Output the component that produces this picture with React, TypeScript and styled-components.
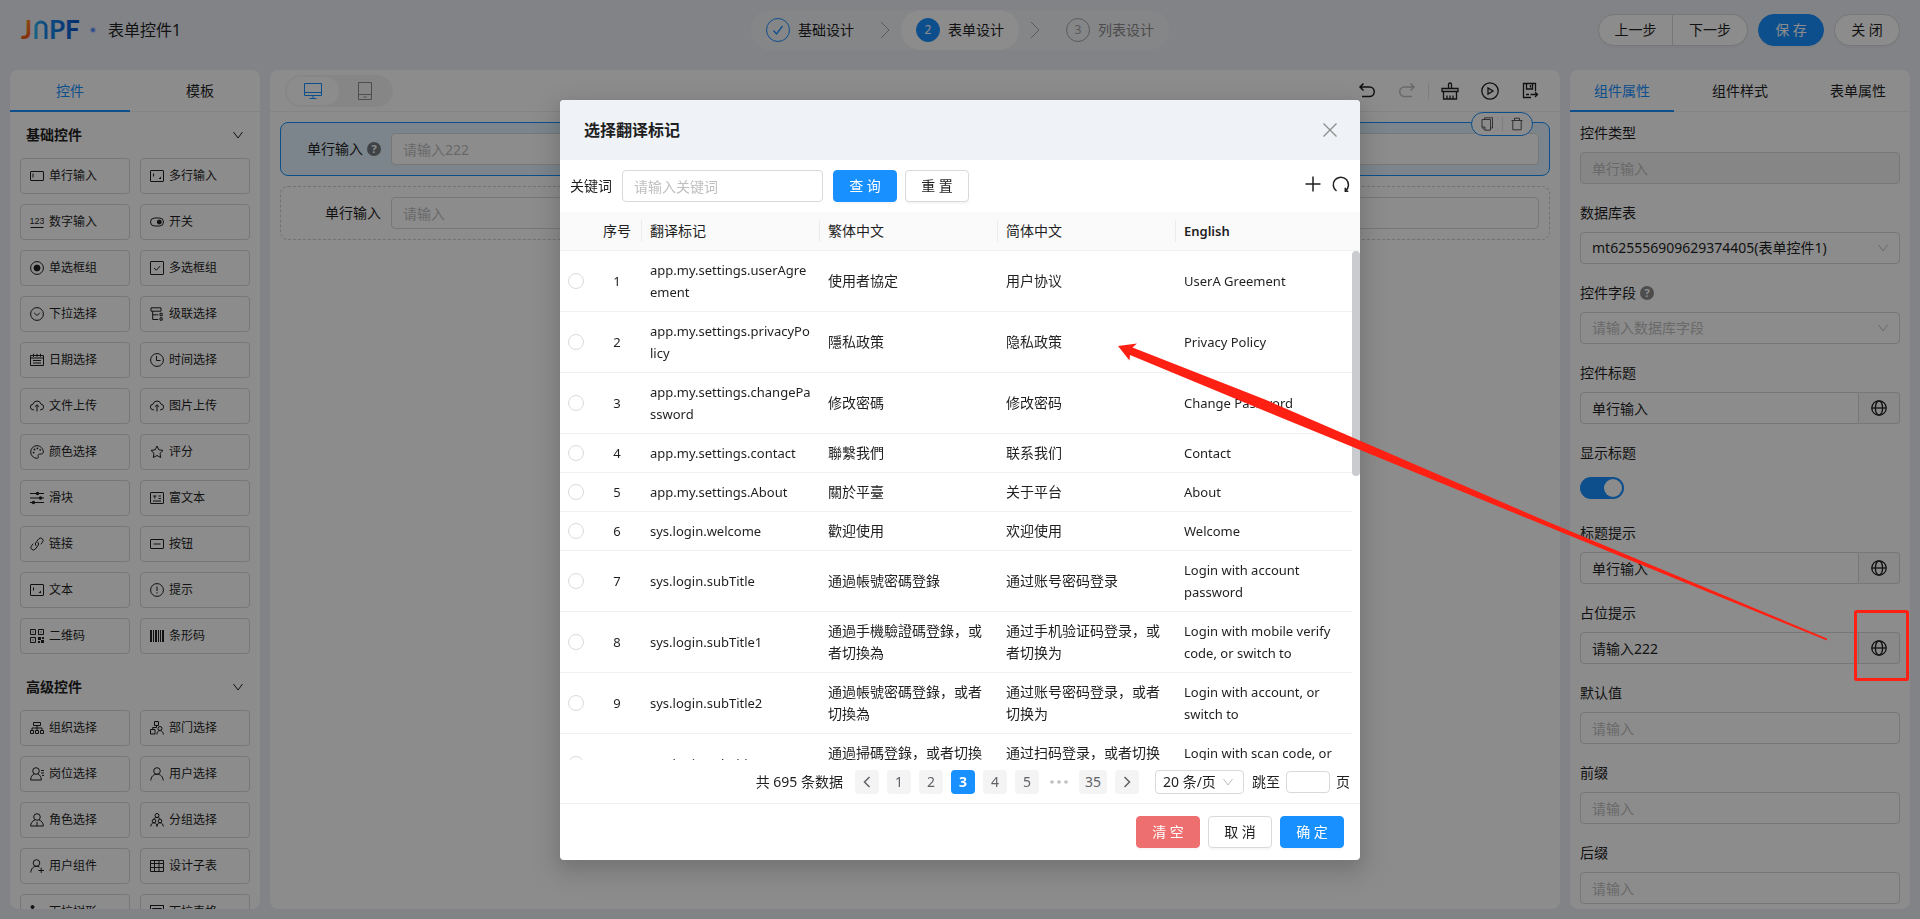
import React, { useState } from "react";
import styled, { createGlobalStyle, css } from "styled-components";

const primary = "#1890ff";
const line = "#d9d9d9";
const softLine = "#f0f0f0";
const textColor = "#1f1f1f";
const muted = "#bfbfbf";
const mark = "#ff2014";

const GlobalStyle = createGlobalStyle`
  * { box-sizing: border-box; }
  body {
    margin: 0;
    font-family: "Noto Sans", "Noto Sans CJK SC", sans-serif;
    font-size: 14px;
    line-height: 22px;
    color: ${textColor};
    overflow: hidden;
  }
  button, input, select { font: inherit; color: inherit; margin: 0; }
  button { cursor: pointer; padding: 0; border: 0; background: none; }
  svg { display: block; flex: none; }
`;

/* ---------- icons ---------- */

const Glyph = styled.svg<{ $size?: number }>`
  width: ${(p) => p.$size ?? 14}px;
  height: ${(p) => p.$size ?? 14}px;
  fill: none;
  stroke: currentColor;
  stroke-width: 1;
`;

const IconDigits = styled.text`
  font-family: "Liberation Sans", sans-serif;
  font-size: 9px;
  fill: currentColor;
  stroke: none;
`;

const controlIcons: Record<string, React.ReactNode> = {
  input: (
    <>
      <rect x=".5" y="2.5" width="13" height="9" rx=".5" />
      <path d="M3 4.5v4" />
    </>
  ),
  textarea: (
    <>
      <rect x=".5" y="1.5" width="13" height="11" rx=".5" />
      <path d="M3.5 4.5v3" />
      <path d="M11 7.5V10H8.5z" fill="currentColor" stroke="none" />
    </>
  ),
  number: (
    <>
      <IconDigits x="-.5" y="9">123</IconDigits>
      <path d="M.5 12.5h13" />
    </>
  ),
  toggle: (
    <>
      <rect x=".5" y="3" width="13" height="8" rx="4" />
      <circle cx="9.3" cy="7" r="2" fill="currentColor" />
    </>
  ),
  radio: (
    <>
      <circle cx="7" cy="7" r="6.4" />
      <circle cx="7" cy="7" r="3" fill="currentColor" />
    </>
  ),
  checkbox: (
    <>
      <rect x=".5" y=".5" width="13" height="13" rx=".5" />
      <path d="M4 7l2.3 2.2L10.2 5" />
    </>
  ),
  select: (
    <>
      <circle cx="7" cy="7" r="6.4" />
      <path d="M4.2 5.8L7 8.6l2.8-2.8" />
    </>
  ),
  cascade: (
    <>
      <path d="M1 .8h10v3.4H1zM2.7 4.2v8.3h5.6M2.7 7.8h5.6" />
      <path d="M10 6.3h2.2v2.4H10zM10 10.8h2.2v2.4H10z" />
    </>
  ),
  date: <path d="M.5 2.5h13v10H.5zM.5 5h13M3.5.8v3M7 .8v3M10.5.8v3M3 7.5h8M3 10h8" />,
  time: (
    <>
      <circle cx="7" cy="7" r="6.4" />
      <path d="M6.5 3v4.5h4" />
    </>
  ),
  upload: (
    <path d="M4 10.8H3.4A2.8 2.8 0 0 1 3 5.2a4.1 4.1 0 0 1 8 0 2.8 2.8 0 0 1-.4 5.6H10M7 12.5V6M4.9 7.8L7 5.8l2.1 2" />
  ),
  color: (
    <>
      <path d="M7 .7a6.3 6.3 0 1 0 0 12.6c1.3 0 1.6-.9 1.2-1.8-.6-1.3.2-2.5 1.6-2.5h1.5c1.3 0 2-.8 2-2C13.3 3.4 10.5.7 7 .7z" />
      <g fill="currentColor" stroke="none">
        <circle cx="3.6" cy="7.6" r=".9" />
        <circle cx="4.5" cy="4.5" r=".9" />
        <circle cx="7.4" cy="3.3" r=".9" />
        <circle cx="10.2" cy="4.8" r=".9" />
      </g>
    </>
  ),
  rate: <path d="M7 1l1.8 3.8 4.2.6-3 2.9.7 4.2L7 10.5l-3.7 2 .7-4.2-3-2.9 4.2-.6z" />,
  slider: (
    <>
      <path d="M0 2.5h14M0 7h14M0 11.5h14" />
      <g fill="currentColor" stroke="none">
        <circle cx="7.5" cy="2.5" r="1.7" />
        <circle cx="10.5" cy="7" r="1.7" />
        <circle cx="3.5" cy="11.5" r="1.7" />
      </g>
    </>
  ),
  rich: (
    <>
      <rect x=".5" y="1.5" width="13" height="11" rx=".5" />
      <path d="M3 5h3.5M4.8 5v2.5M8.5 5H11M8.5 7.5H11M3 10h8" />
    </>
  ),
  link: (
    <path d="M6.2 8.8a2.5 2.5 0 0 1 0-3.6l2.6-3.4a2.5 2.5 0 0 1 3.6 3.5L10.8 7.3M7.8 5.2a2.5 2.5 0 0 1 0 3.6l-2.6 3.4a2.5 2.5 0 0 1-3.6-3.5L3.2 6.7" />
  ),
  button: (
    <>
      <rect x=".5" y="2.5" width="13" height="9" rx=".5" />
      <path d="M3.5 7h7" />
    </>
  ),
  alert: (
    <>
      <circle cx="7" cy="7" r="6.4" />
      <path d="M7 3.5v4.5M7 9.2v1.3" />
    </>
  ),
  qrcode: (
    <>
      <path d="M.5.5h5v5h-5zM8.5.5h5v5h-5zM.5 8.5h5v5h-5z" />
      <path
        d="M2.5 2.5h1v1h-1zM10.5 2.5h1v1h-1zM2.5 10.5h1v1h-1zM8 8h3v3H8zM11 11h3v3h-3zM12 8h2v2h-2zM8 12h2v2H8z"
        fill="currentColor"
        stroke="none"
      />
    </>
  ),
  barcode: (
    <path
      d="M0 1h2v12H0zM3 1h1v12H3zM5 1h2v12H5zM8 1h1v12H8zM10 1h1v12h-1zM12 1h2v12h-2z"
      fill="currentColor"
      stroke="none"
    />
  ),
  org: <path d="M3.5 1.5h7v3h-7zM.5 9.5h3v3h-3zM5.5 9.5h3v3h-3zM10.5 9.5h3v3h-3zM7 4.5v5M2 9.5V7h10v2.5" />,
  dept: (
    <>
      <path d="M4.5.5h4v4h-4zM.5 8.5H5V13H.5zM6.5 4.5v2H2.7v2" />
      <circle cx="10" cy="7.5" r="2" />
      <path d="M6.8 13.5c.2-2.5 1.5-4 3.2-4s3 1.5 3.5 4" />
    </>
  ),
  post: (
    <>
      <circle cx="6" cy="4" r="3.3" />
      <path d="M4.3 6.8C2 8 .8 10 .6 13h10.8c-.2-3-1.4-5-3.7-6.2M11 3.5h3M11 6h3M12 8.5h2" />
    </>
  ),
  user: (
    <>
      <circle cx="7" cy="4" r="3.3" />
      <path d="M.8 13.5C1 10 3 7.3 7 7.3s6 2.7 6.2 6.2" />
    </>
  ),
  role: (
    <>
      <circle cx="7" cy="4" r="3.3" />
      <path d="M5 6.8C2.3 8 .8 10 .6 13h12.8c-.2-3-1.7-5-4.4-6.2M7 9v4" />
    </>
  ),
  group: (
    <>
      <circle cx="7" cy="2.5" r="2" />
      <circle cx="4" cy="8" r="1.8" />
      <circle cx="10" cy="8" r="1.8" />
      <path d="M4 6c.3-1 1.3-1.5 3-1.5s2.7.5 3 1.5M.8 13.5c0-2.2 1.2-3.7 3.2-3.7s3 1.5 3 3.7c0-2.2 1-3.7 3-3.7s3.2 1.5 3.2 3.7" />
    </>
  ),
  userAdd: (
    <>
      <circle cx="6.5" cy="4" r="3.3" />
      <path d="M.8 13.5C1 10 3 7.3 6.5 7.3c1.2 0 2.2.3 3 .8M8.5 11.5H14M11.2 8.8V14" />
    </>
  ),
  table: <path d="M.5 1.5h13v11H.5zM.5 4.5h13M.5 8.5h13M4.5 1.5v11M9 1.5v11" />,
  tree: (
    <>
      <path d="M2.5 2.5v9h7M2.5 7h7" />
      <circle cx="2.5" cy="2" r="1.5" fill="currentColor" />
      <circle cx="11" cy="7" r="1.5" />
      <circle cx="11" cy="11.5" r="1.5" />
    </>
  ),
  popupTable: (
    <>
      <rect x=".5" y=".5" width="13" height="13" />
      <path d="M2.5 3.5h9v7h-9zM2.5 7h9" />
    </>
  ),
};

const ChevronDown = ({ size = 12 }: { size?: number }) => (
  <Glyph $size={size} viewBox="0 0 12 12" aria-hidden>
    <path d="M1.5 3L6 9l4.5-6" />
  </Glyph>
);

const ChevronStep = () => (
  <Glyph $size={16} viewBox="0 0 16 16" aria-hidden>
    <path d="M4 0l8 8-8 8" />
  </Glyph>
);

const GlobeIcon = () => (
  <Glyph $size={16} viewBox="0 0 16 16" aria-hidden>
    <g strokeWidth="1.3">
      <circle cx="8" cy="8" r="7.2" />
      <ellipse cx="8" cy="8" rx="3.6" ry="7.2" />
      <path d="M.8 8h14.4" />
    </g>
  </Glyph>
);

const HelpDot = styled.span<{ $light?: boolean }>`
  display: inline-flex;
  align-items: center;
  justify-content: center;
  width: 14px;
  height: 14px;
  border-radius: 50%;
  background: ${(p) => (p.$light ? "#8c8c8c" : "#737b80")};
  color: #fff;
  font-size: 11px;
  font-weight: 700;
  line-height: 14px;
`;

/* ---------- page frame ---------- */

const Page = styled.div`
  display: flex;
  flex-direction: column;
  height: 100vh;
  background: #ebeef5;
`;

const Header = styled.header`
  display: grid;
  grid-template-columns: 1fr auto 1fr;
  align-items: center;
  height: 60px;
  margin-bottom: 10px;
  padding: 0 20px;
`;

const Brand = styled.div`
  display: flex;
  align-items: center;
  gap: 12px;
  padding-left: 2px;
  font-size: 16px;
`;

const LogoMark = styled.svg`
  width: 56px;
  height: 20px;
  font-family: Lato, sans-serif;
  font-size: 26px;
  font-weight: 700;
  overflow: visible;
`;

const BrandDot = styled.i`
  width: 6px;
  height: 6px;
  border: 1px solid #c9dbff;
  border-radius: 50%;
  background: #5a8dff;
`;

const Steps = styled.ol`
  display: flex;
  margin: 0;
  padding: 0;
  list-style: none;
  border-radius: 20px;
  background: #f2f4f7;
`;

const StepGap = styled.li`
  display: flex;
  align-items: center;
  justify-content: center;
  width: 32px;
  color: #a6a6a6;
`;

const Step = styled.li<{ $active?: boolean; $waiting?: boolean }>`
  display: flex;
  align-items: center;
  gap: 8px;
  height: 40px;
  padding: 0 15px;
  border-radius: 20px;
  background: ${(p) => (p.$active ? "#fff" : "transparent")};
  color: ${(p) => (p.$waiting ? "#8c8c8c" : textColor)};
`;

const StepBadge = styled.span<{ $state: "done" | "active" | "waiting" }>`
  display: flex;
  align-items: center;
  justify-content: center;
  width: 24px;
  height: 24px;
  border: 1px solid ${(p) => (p.$state === "waiting" ? "#a6a6a6" : primary)};
  border-radius: 50%;
  background: ${(p) => (p.$state === "active" ? primary : "transparent")};
  color: ${(p) => (p.$state === "active" ? "#fff" : p.$state === "done" ? primary : "#a6a6a6")};
  font-size: 12px;
`;

const HeaderActions = styled.div`
  display: flex;
  justify-content: flex-end;
  gap: 10px;
`;

const PillGroup = styled.div`
  display: flex;
`;

const PillButton = styled.button<{ $primary?: boolean; $side?: "left" | "right" }>`
  width: ${(p) => (p.$side ? 75 : 66)}px;
  height: 32px;
  border: 1px solid ${(p) => (p.$primary ? primary : line)};
  border-left-width: ${(p) => (p.$side === "right" ? 0 : 1)}px;
  border-radius: ${(p) =>
    p.$side === "left" ? "16px 0 0 16px" : p.$side === "right" ? "0 16px 16px 0" : "16px"};
  background: ${(p) => (p.$primary ? primary : "#fff")};
  color: ${(p) => (p.$primary ? "#fff" : textColor)};
  box-shadow: 0 2px 0 rgba(0, 0, 0, 0.02);
`;

const Workspace = styled.main`
  display: flex;
  flex: 1;
  gap: 10px;
  min-height: 0;
  padding: 0 10px 10px;
`;

const Panel = styled.section<{ $width?: number }>`
  display: flex;
  flex-direction: column;
  flex: ${(p) => (p.$width ? `0 0 ${p.$width}px` : "1")};
  min-width: 0;
  border-radius: 8px;
  background: #fff;
  overflow: hidden;
`;

const TabBar = styled.div`
  display: flex;
  flex: none;
  justify-content: space-between;
  height: 42px;
  box-shadow: inset 0 -1px ${softLine};
`;

const Tab = styled.button<{ $active?: boolean; $width: number }>`
  width: ${(p) => p.$width}px;
  padding-top: 2px;
  border-bottom: 2px solid ${(p) => (p.$active ? primary : "transparent")};
  color: ${(p) => (p.$active ? primary : textColor)};
`;

/* ---------- control palette ---------- */

const PaletteBody = styled.div`
  display: flex;
  flex-direction: column;
  gap: 10px;
  padding: 0 10px;
  overflow: hidden;
`;

const GroupTitle = styled.h3`
  display: flex;
  align-items: center;
  justify-content: space-between;
  height: 46px;
  margin: 0;
  padding: 0 6px;
  font-size: 14px;
  font-weight: 700;
`;

const ControlGrid = styled.div`
  display: grid;
  grid-template-columns: 1fr 1fr;
  gap: 10px;
`;

const ControlButton = styled.button`
  display: flex;
  align-items: center;
  gap: 5px;
  height: 36px;
  padding: 0 9px;
  border: 1px solid ${line};
  border-radius: 4px;
  font-size: 12px;
`;

/* ---------- canvas ---------- */

const Toolbar = styled.div`
  display: flex;
  flex: none;
  align-items: center;
  justify-content: space-between;
  height: 42px;
  padding: 0 10px 0 15px;
  border-bottom: 1px solid ${softLine};
`;

const DeviceSwitch = styled.div`
  display: flex;
  padding: 2px;
  border-radius: 16px;
  background: #f5f5f5;
`;

const DeviceButton = styled.button<{ $active?: boolean }>`
  display: flex;
  align-items: center;
  justify-content: center;
  width: 52px;
  height: 28px;
  border-radius: 14px;
  background: ${(p) => (p.$active ? "#fff" : "transparent")};
  color: ${(p) => (p.$active ? primary : "#8c8c8c")};
`;

const ToolGroup = styled.div`
  display: flex;
  align-items: center;
`;

const ToolButton = styled.button<{ $off?: boolean }>`
  display: flex;
  align-items: center;
  justify-content: center;
  width: 40px;
  height: 32px;
  color: ${(p) => (p.$off ? muted : textColor)};
`;

const ToolDivider = styled.i`
  width: 1px;
  height: 16px;
  margin: 0 1px;
  background: #e4e4e4;
`;

const FormCanvas = styled.div`
  display: flex;
  flex-direction: column;
  gap: 10px;
  padding: 10px;
`;

const FormRow = styled.div<{ $selected?: boolean }>`
  position: relative;
  display: flex;
  align-items: center;
  padding: 10px;
  border: 1px dashed #cfcfcf;
  border-radius: 8px;
  ${(p) =>
    p.$selected &&
    css`
      border: 1px solid ${primary};
      background: #e0f2fd;
    `}
`;

const RowLabel = styled.label`
  display: flex;
  align-items: center;
  justify-content: flex-end;
  gap: 4px;
  flex: 0 0 100px;
  padding-right: 10px;
`;

const inputLook = css`
  width: 100%;
  min-width: 0;
  height: 32px;
  padding: 0 11px;
  border: 1px solid ${line};
  border-radius: 4px;
  background: #fff;
  outline: none;
  &::placeholder {
    color: ${muted};
    opacity: 1;
  }
`;

const TextInput = styled.input`
  ${inputLook}
  &:disabled {
    background: #f5f5f5;
    color: ${muted};
  }
`;

const RowTools = styled.div`
  position: absolute;
  top: -11px;
  right: 16px;
  display: flex;
  align-items: center;
  width: 62px;
  height: 24px;
  border: 1px solid ${primary};
  border-radius: 12px;
  background: #fff;
  color: #595959;
`;

const RowToolButton = styled.button`
  display: flex;
  flex: 1;
  justify-content: center;
  & + & {
    border-left: 1px solid #e4e4e4;
  }
`;

/* ---------- properties ---------- */

const PropertyBody = styled.div`
  display: flex;
  flex-direction: column;
  gap: 18px;
  padding: 10px;
  overflow: hidden;
`;

const Field = styled.div`
  display: flex;
  flex-direction: column;
  gap: 8px;
`;

const FieldLabel = styled.label`
  display: flex;
  align-items: center;
  gap: 4px;
  height: 22px;
`;

const FieldControl = styled.div`
  display: flex;
  align-items: center;
  height: 32px;
`;

const SelectBox = styled.div<{ $compact?: boolean }>`
  position: relative;
  display: flex;
  align-items: center;
  width: ${(p) => (p.$compact ? "89px" : "100%")};
  margin-left: ${(p) => (p.$compact ? 8 : 0)}px;
  color: ${muted};
  svg {
    position: absolute;
    right: ${(p) => (p.$compact ? 10 : 11)}px;
    pointer-events: none;
  }
`;

const Select = styled.select<{ $empty?: boolean; $compact?: boolean }>`
  ${inputLook}
  appearance: none;
  color: ${(p) => (p.$empty ? muted : textColor)};
  ${(p) =>
    p.$compact &&
    css`
      height: 24px;
      padding: 0 7px;
      line-height: 20px;
    `}
`;

const GroupInput = styled(TextInput)`
  border-radius: 4px 0 0 4px;
`;

const LanguageButton = styled.button`
  display: flex;
  flex: 0 0 41px;
  align-items: center;
  justify-content: center;
  height: 32px;
  border: 1px solid ${line};
  border-left: 0;
  border-radius: 0 4px 4px 0;
  background: #fafafa;
`;

const Switch = styled.input`
  appearance: none;
  width: 44px;
  height: 22px;
  padding: 2px;
  border-radius: 11px;
  background: ${muted};
  display: flex;
  &::before {
    content: "";
    width: 18px;
    height: 18px;
    border-radius: 50%;
    background: #fff;
  }
  &:checked {
    background: ${primary};
    justify-content: flex-end;
  }
`;

/* ---------- dialog ---------- */

const Mask = styled.div`
  position: fixed;
  inset: 0;
  display: flex;
  align-items: flex-start;
  justify-content: center;
  padding-top: 100px;
  background: rgba(0, 0, 0, 0.45);
`;

const Dialog = styled.div`
  display: flex;
  flex-direction: column;
  width: 800px;
  border-radius: 4px;
  background: #fff;
  overflow: hidden;
  box-shadow: 0 6px 16px rgba(0, 0, 0, 0.08), 0 9px 28px 8px rgba(0, 0, 0, 0.12);
`;

const DialogHead = styled.div`
  display: flex;
  align-items: center;
  justify-content: space-between;
  height: 60px;
  padding: 0 22px 0 24px;
  background: #eff3f8;
  button {
    color: #8c8c8c;
  }
`;

const DialogTitle = styled.h2`
  margin: 0;
  font-size: 16px;
  font-weight: 700;
`;

const SearchBar = styled.form`
  display: flex;
  align-items: center;
  padding: 10px;
`;

const SearchInput = styled(TextInput)`
  width: 201px;
  margin: 0 10px;
`;

const Button = styled.button<{ $tone?: "primary" | "danger" }>`
  width: 64px;
  height: 32px;
  border: 1px solid ${(p) => (p.$tone === "primary" ? primary : p.$tone === "danger" ? "#ed6f6f" : line)};
  border-radius: 4px;
  background: ${(p) => (p.$tone === "primary" ? primary : p.$tone === "danger" ? "#ed6f6f" : "#fff")};
  color: ${(p) => (p.$tone ? "#fff" : textColor)};
  box-shadow: 0 2px 0 rgba(0, 0, 0, 0.03);
  & + & {
    margin-left: 8px;
  }
`;

const SearchTools = styled.div`
  display: flex;
  gap: 10px;
  margin-left: auto;
  padding-bottom: 4px;
`;

const TableHeadWrap = styled.div`
  padding-right: 8px;
  border-bottom: 1px solid ${softLine};
  background: #fafafa;
`;

const TableScroll = styled.div`
  display: flex;
  height: calc(100vh - 410px);
  overflow: hidden;
`;

const ScrollThumb = styled.div`
  flex: 0 0 8px;
  height: 225px;
  border-radius: 4px;
  background: #c9cbce;
`;

const Table = styled.table`
  width: 100%;
  table-layout: fixed;
  border-collapse: separate;
  border-spacing: 0;
  align-self: flex-start;
`;

const Column = styled.col<{ $width?: number }>`
  width: ${(p) => (p.$width ? `${p.$width}px` : "auto")};
`;

const HeadCell = styled.th<{ $strong?: boolean; $center?: boolean }>`
  height: 38px;
  padding: 0 8px;
  font-size: ${(p) => (p.$strong ? 13 : 14)}px;
  font-weight: ${(p) => (p.$strong ? 600 : 400)};
  text-align: ${(p) => (p.$center ? "center" : "left")};
  background: linear-gradient(#ececec, #ececec) right center / 1px 22px no-repeat;
  white-space: nowrap;
  &:first-child,
  &:last-child {
    background: none;
  }
`;

const Cell = styled.td<{ $latin?: boolean; $center?: boolean }>`
  padding: 8px;
  border-bottom: 1px solid ${softLine};
  font-size: ${(p) => (p.$latin ? 13 : 14)}px;
  text-align: ${(p) => (p.$center ? "center" : "left")};
  vertical-align: middle;
  overflow-wrap: break-word;
`;

const Radio = styled.input`
  appearance: none;
  display: block;
  width: 16px;
  height: 16px;
  border: 1px solid ${line};
  border-radius: 50%;
  background: #fff;
  &:checked {
    border: 5px solid ${primary};
  }
`;

const Pager = styled.nav`
  display: flex;
  align-items: center;
  justify-content: flex-end;
  gap: 8px;
  padding: 10px 10px 9px;
`;

const Total = styled.span`
  margin-right: 4px;
`;

const PageButton = styled.button<{ $active?: boolean }>`
  display: flex;
  align-items: center;
  justify-content: center;
  min-width: 24px;
  height: 24px;
  padding: 0 6px;
  border-radius: 4px;
  background: ${(p) => (p.$active ? primary : "#f4f4f5")};
  color: ${(p) => (p.$active ? "#fff" : "#606266")};
  font-weight: ${(p) => (p.$active ? 700 : 400)};
`;

const More = styled.span`
  display: flex;
  align-items: center;
  justify-content: center;
  width: 24px;
  color: ${muted};
`;

const JumpLabel = styled.label`
  display: flex;
  align-items: center;
  gap: 6px;
`;

const JumpInput = styled.input`
  width: 44px;
  height: 22px;
  padding: 0 7px;
  border: 1px solid ${line};
  border-radius: 4px;
`;

const DialogFoot = styled.div`
  display: flex;
  justify-content: flex-end;
  padding: 12px 16px;
  border-top: 1px solid ${softLine};
`;

/* ---------- annotation ---------- */

const Annotation = styled.svg`
  position: fixed;
  top: 0;
  right: 0;
  width: 1920px;
  height: 919px;
  pointer-events: none;
`;

/* ---------- data ---------- */

const groups = [
  {
    title: "基础控件",
    items: [
      ["input", "单行输入"], ["textarea", "多行输入"],
      ["number", "数字输入"], ["toggle", "开关"],
      ["radio", "单选框组"], ["checkbox", "多选框组"],
      ["select", "下拉选择"], ["cascade", "级联选择"],
      ["date", "日期选择"], ["time", "时间选择"],
      ["upload", "文件上传"], ["upload", "图片上传"],
      ["color", "颜色选择"], ["rate", "评分"],
      ["slider", "滑块"], ["rich", "富文本"],
      ["link", "链接"], ["button", "按钮"],
      ["textarea", "文本"], ["alert", "提示"],
      ["qrcode", "二维码"], ["barcode", "条形码"],
    ],
  },
  {
    title: "高级控件",
    items: [
      ["org", "组织选择"], ["dept", "部门选择"],
      ["post", "岗位选择"], ["user", "用户选择"],
      ["role", "角色选择"], ["group", "分组选择"],
      ["userAdd", "用户组件"], ["table", "设计子表"],
      ["tree", "下拉树形"], ["popupTable", "下拉表格"],
    ],
  },
];

const translations = [
  ["app.my.settings.userAgreement", "使用者協定", "用户协议", "UserA Greement"],
  ["app.my.settings.privacyPolicy", "隱私政策", "隐私政策", "Privacy Policy"],
  ["app.my.settings.changePassword", "修改密碼", "修改密码", "Change Password"],
  ["app.my.settings.contact", "聯繫我們", "联系我们", "Contact"],
  ["app.my.settings.About", "關於平臺", "关于平台", "About"],
  ["sys.login.welcome", "歡迎使用", "欢迎使用", "Welcome"],
  ["sys.login.subTitle", "通過帳號密碼登錄", "通过账号密码登录", "Login with account password"],
  ["sys.login.subTitle1", "通過手機驗證碼登錄，或者切換為", "通过手机验证码登录，或者切换为", "Login with mobile verify code, or switch to"],
  ["sys.login.subTitle2", "通過帳號密碼登錄，或者切換為", "通过账号密码登录，或者切换为", "Login with account, or switch to"],
  ["sys.login.subTitle3", "通過掃碼登錄，或者切換為", "通过扫码登录，或者切换为", "Login with scan code, or switch to"],
];

type FieldSpec = {
  id: string;
  label: string;
  kind: "readonly" | "select" | "i18n" | "switch" | "text";
  value?: string;
  help?: boolean;
};

const fields: FieldSpec[] = [
  { id: "type", label: "控件类型", kind: "readonly", value: "单行输入" },
  { id: "table", label: "数据库表", kind: "select", value: "mt625556909629374405(表单控件1)" },
  { id: "column", label: "控件字段", kind: "select", help: true },
  { id: "title", label: "控件标题", kind: "i18n", value: "单行输入" },
  { id: "showTitle", label: "显示标题", kind: "switch" },
  { id: "tip", label: "标题提示", kind: "i18n", value: "单行输入" },
  { id: "placeholder", label: "占位提示", kind: "i18n", value: "请输入222" },
  { id: "default", label: "默认值", kind: "text" },
  { id: "prefix", label: "前缀", kind: "text" },
  { id: "suffix", label: "后缀", kind: "text" },
];

/* ---------- sections ---------- */

const TopHeader = () => (
  <Header>
    <Brand>
      <LogoMark viewBox="0 0 56 20" role="img" aria-label="JNPF">
        <defs>
          <linearGradient id="warm" x1="0" y1="0" x2="0" y2="1">
            <stop offset="0" stopColor="#ff9a1f" />
            <stop offset="1" stopColor="#f2470f" />
          </linearGradient>
          <linearGradient id="arch" x1="0" y1="0" x2="1" y2="0">
            <stop offset="0" stopColor="#28aef2" />
            <stop offset="1" stopColor="#1685e6" />
          </linearGradient>
          <linearGradient id="cool" x1="0" y1="0" x2="1" y2="0">
            <stop offset="0" stopColor="#168be8" />
            <stop offset="1" stopColor="#0a4fc8" />
          </linearGradient>
          <clipPath id="archClip">
            <rect x="11" y="0" width="16" height="19" />
          </clipPath>
        </defs>
        <text x="-1" y="19" fill="url(#warm)">J</text>
        <g clipPath="url(#archClip)">
          <rect x="14" y="2" width="10" height="40" rx="5" fill="none" stroke="url(#arch)" strokeWidth="3" />
        </g>
        <text y="19" fill="url(#cool)">
          <tspan x="27">P</tspan>
          <tspan x="43">F</tspan>
        </text>
      </LogoMark>
      <BrandDot />
      <span>表单控件1</span>
    </Brand>
    <Steps>
      <Step>
        <StepBadge $state="done">
          <Glyph $size={12} viewBox="0 0 12 12" aria-hidden>
            <path d="M1.5 6.5l3 3.5 6-8" strokeWidth="1.3" />
          </Glyph>
        </StepBadge>
        基础设计
      </Step>
      <StepGap>
        <ChevronStep />
      </StepGap>
      <Step $active>
        <StepBadge $state="active">2</StepBadge>
        表单设计
      </Step>
      <StepGap>
        <ChevronStep />
      </StepGap>
      <Step $waiting>
        <StepBadge $state="waiting">3</StepBadge>
        列表设计
      </Step>
    </Steps>
    <HeaderActions>
      <PillGroup>
        <PillButton $side="left">上一步</PillButton>
        <PillButton $side="right">下一步</PillButton>
      </PillGroup>
      <PillButton $primary>保 存</PillButton>
      <PillButton>关 闭</PillButton>
    </HeaderActions>
  </Header>
);

const Palette = () => (
  <Panel $width={250}>
    <TabBar role="tablist">
      <Tab $width={120} $active role="tab">控件</Tab>
      <Tab $width={120} role="tab">模板</Tab>
    </TabBar>
    <PaletteBody>
      {groups.map((group) => (
        <div key={group.title}>
          <GroupTitle>
            {group.title}
            <ChevronDown />
          </GroupTitle>
          <ControlGrid>
            {group.items.map(([icon, name]) => (
              <ControlButton key={name}>
                <Glyph viewBox="0 0 14 14" aria-hidden>{controlIcons[icon]}</Glyph>
                {name}
              </ControlButton>
            ))}
          </ControlGrid>
        </div>
      ))}
    </PaletteBody>
  </Panel>
);

const Designer = () => (
  <Panel>
    <Toolbar>
      <DeviceSwitch>
        <DeviceButton $active aria-label="电脑端">
          <Glyph $size={18} viewBox="0 0 18 18">
            <path d="M.5 1.5h17v12H.5zM.5 10.5h17M9 13.5v3M5.5 16.5h7" />
          </Glyph>
        </DeviceButton>
        <DeviceButton aria-label="移动端">
          <Glyph $size={18} viewBox="0 0 18 18">
            <path d="M2.5.5h13v17h-13zM2.5 12.5h13M7.5 15h3" />
          </Glyph>
        </DeviceButton>
      </DeviceSwitch>
      <ToolGroup>
        <ToolButton aria-label="撤销">
          <Glyph $size={18} viewBox="0 0 18 18">
            <path d="M5.5 1.5L2 5l3.5 3.5M2 5h9.500a4.5 4.5 0 0 1 0 9.500H4" strokeWidth="1.5" />
          </Glyph>
        </ToolButton>
        <ToolButton $off aria-label="重做">
          <Glyph $size={18} viewBox="0 0 18 18">
            <path d="M12.5 1.5L16 5l-3.5 3.5M16 5H6.500a4.5 4.5 0 0 0 0 9.500H14" strokeWidth="1.5" />
          </Glyph>
        </ToolButton>
        <ToolDivider />
        <ToolButton aria-label="清空">
          <Glyph $size={18} viewBox="0 0 18 18">
            <path
              d="M1 6.5h16v3H1zM7.5 6.5V2.500a1.5 1.5 0 0 1 3 0v4M2.5 9.500V17h13V9.500M6 17v-3.5M9 17v-3.5M12 17v-3.5"
              strokeWidth="1.3"
            />
          </Glyph>
        </ToolButton>
        <ToolButton aria-label="预览">
          <Glyph $size={18} viewBox="0 0 18 18">
            <circle cx="9" cy="9" r="8.2" strokeWidth="1.3" />
            <path d="M7 6v6l5-3z" strokeWidth="1.3" />
          </Glyph>
        </ToolButton>
        <ToolButton aria-label="保存">
          <Glyph $size={18} viewBox="0 0 18 18">
            <path
              d="M14.5 9V1.500H2.500v14H10M5.500 1.500v5.500h6V1.500M9.500 3v2.500M5 12.500h3M9.500 12.500h7M14 10l2.500 2.500L14 15"
              strokeWidth="1.3"
            />
          </Glyph>
        </ToolButton>
      </ToolGroup>
    </Toolbar>
    <FormCanvas>
      <FormRow $selected>
        <RowLabel htmlFor="row-1">单行输入<HelpDot>?</HelpDot></RowLabel>
        <TextInput id="row-1" placeholder="请输入222" />
        <RowTools>
          <RowToolButton aria-label="复制">
            <Glyph viewBox="0 0 14 14">
              <path d="M4.5 2V.8h8V11H11M2 2.5h8.5v10.7H5L2 10.500zM2 10h3v3" />
            </Glyph>
          </RowToolButton>
          <RowToolButton aria-label="删除">
            <Glyph viewBox="0 0 14 14">
              <path d="M1.5 3.5h11M4.5 3.5V1.200h5v2.300M2.800 3.500v9.300h8.400V3.500" />
            </Glyph>
          </RowToolButton>
        </RowTools>
      </FormRow>
      <FormRow>
        <RowLabel htmlFor="row-2">单行输入</RowLabel>
        <TextInput id="row-2" placeholder="请输入" />
      </FormRow>
    </FormCanvas>
  </Panel>
);

const PropertyControl = ({ field }: { field: FieldSpec }) => {
  switch (field.kind) {
    case "readonly":
      return <TextInput id={field.id} defaultValue={field.value} disabled />;
    case "select":
      return (
        <SelectBox>
          <Select id={field.id} $empty={!field.value}>
            <option>{field.value ?? "请输入数据库字段"}</option>
          </Select>
          <ChevronDown />
        </SelectBox>
      );
    case "i18n":
      return (
        <>
          <GroupInput id={field.id} defaultValue={field.value} />
          <LanguageButton aria-label="选择翻译标记"><GlobeIcon /></LanguageButton>
        </>
      );
    case "switch":
      return <Switch id={field.id} type="checkbox" defaultChecked />;
    default:
      return <TextInput id={field.id} placeholder="请输入" />;
  }
};

const Properties = () => (
  <Panel $width={340}>
    <TabBar role="tablist">
      <Tab $width={104} $active role="tab">组件属性</Tab>
      <Tab $width={104} role="tab">组件样式</Tab>
      <Tab $width={104} role="tab">表单属性</Tab>
    </TabBar>
    <PropertyBody>
      {fields.map((field) => (
        <Field key={field.id}>
          <FieldLabel htmlFor={field.id}>
            {field.label}
            {field.help && <HelpDot $light>?</HelpDot>}
          </FieldLabel>
          <FieldControl>
            <PropertyControl field={field} />
          </FieldControl>
        </Field>
      ))}
    </PropertyBody>
  </Panel>
);

const Columns = () => (
  <colgroup>
    <Column $width={32} />
    <Column $width={50} />
    <Column $width={178} />
    <Column $width={178} />
    <Column $width={178} />
    <Column />
  </colgroup>
);

const TranslationDialog = () => {
  const [chosen, setChosen] = useState<number | null>(null);
  return (
    <Mask>
      <Dialog role="dialog" aria-labelledby="dialog-title">
        <DialogHead>
          <DialogTitle id="dialog-title">选择翻译标记</DialogTitle>
          <button aria-label="关闭">
            <Glyph $size={16} viewBox="0 0 16 16">
              <path d="M1.5 1.5l13 13M14.5 1.5l-13 13" strokeWidth="1.3" />
            </Glyph>
          </button>
        </DialogHead>
        <SearchBar onSubmit={(e) => e.preventDefault()}>
          <label htmlFor="keyword">关键词</label>
          <SearchInput id="keyword" placeholder="请输入关键词" />
          <Button $tone="primary">查 询</Button>
          <Button type="reset">重 置</Button>
          <SearchTools>
            <button type="button" aria-label="新增">
              <Glyph $size={18} viewBox="0 0 18 18">
                <path d="M9 1.5v15M1.5 9h15" strokeWidth="1.5" />
              </Glyph>
            </button>
            <button type="button" aria-label="刷新">
              <Glyph $size={18} viewBox="0 0 18 18">
                <path d="M4.5 16A7.600 7.600 0 1 1 13.500 15.800" strokeWidth="1.5" />
                <path d="M13.300 12.800v3.500h3" strokeWidth="1.5" />
              </Glyph>
            </button>
          </SearchTools>
        </SearchBar>
        <TableHeadWrap>
          <Table>
            <Columns />
            <thead>
              <tr>
                <HeadCell />
                <HeadCell $center>序号</HeadCell>
                <HeadCell>翻译标记</HeadCell>
                <HeadCell>繁体中文</HeadCell>
                <HeadCell>简体中文</HeadCell>
                <HeadCell $strong>English</HeadCell>
              </tr>
            </thead>
          </Table>
        </TableHeadWrap>
        <TableScroll>
          <Table>
            <Columns />
            <tbody>
              {translations.map(([key, traditional, simplified, english], i) => (
                <tr key={key}>
                  <Cell>
                    <Radio
                      type="radio"
                      name="translation"
                      aria-label={key}
                      checked={chosen === i}
                      onChange={() => setChosen(i)}
                    />
                  </Cell>
                  <Cell $latin $center>{i + 1}</Cell>
                  <Cell $latin>{key}</Cell>
                  <Cell>{traditional}</Cell>
                  <Cell>{simplified}</Cell>
                  <Cell $latin>{english}</Cell>
                </tr>
              ))}
            </tbody>
          </Table>
          <ScrollThumb />
        </TableScroll>
        <Pager aria-label="分页">
          <Total>共 695 条数据</Total>
          <PageButton aria-label="上一页">
            <Glyph $size={12} viewBox="0 0 12 12"><path d="M8.5 1L3.5 6l5 5" strokeWidth="1.5" /></Glyph>
          </PageButton>
          {[1, 2, 3, 4, 5].map((n) => (
            <PageButton key={n} $active={n === 3}>{n}</PageButton>
          ))}
          <More>
            <Glyph $size={18} viewBox="0 0 18 18">
              <g fill="currentColor" stroke="none">
                <circle cx="2" cy="9" r="1.8" />
                <circle cx="9" cy="9" r="1.8" />
                <circle cx="16" cy="9" r="1.8" />
              </g>
            </Glyph>
          </More>
          <PageButton>35</PageButton>
          <PageButton aria-label="下一页">
            <Glyph $size={12} viewBox="0 0 12 12"><path d="M3.5 1l5 5-5 5" strokeWidth="1.5" /></Glyph>
          </PageButton>
          <SelectBox $compact>
            <Select $compact aria-label="每页条数"><option>20 条/页</option></Select>
            <ChevronDown />
          </SelectBox>
          <JumpLabel>跳至<JumpInput />页</JumpLabel>
        </Pager>
        <DialogFoot>
          <Button $tone="danger">清 空</Button>
          <Button>取 消</Button>
          <Button $tone="primary">确 定</Button>
        </DialogFoot>
      </Dialog>
    </Mask>
  );
};

export default function App() {
  return (
    <>
      <GlobalStyle />
      <Page>
        <TopHeader />
        <Workspace>
          <Palette />
          <Designer />
          <Properties />
        </Workspace>
      </Page>
      <TranslationDialog />
      <Annotation viewBox="0 0 1920 919" aria-hidden>
        <rect x="1855.5" y="611.5" width="52" height="68" rx="1" fill="none" stroke={mark} strokeWidth="3" />
        <path
          d="M1118 346L1137 343.5L1132.5 347.5L1265 399.5L1540 518.5L1827 638.5V640.5L1540 523.5L1265 411L1130 355L1129.5 360.5Z"
          fill={mark}
        />
      </Annotation>
    </>
  );
}
